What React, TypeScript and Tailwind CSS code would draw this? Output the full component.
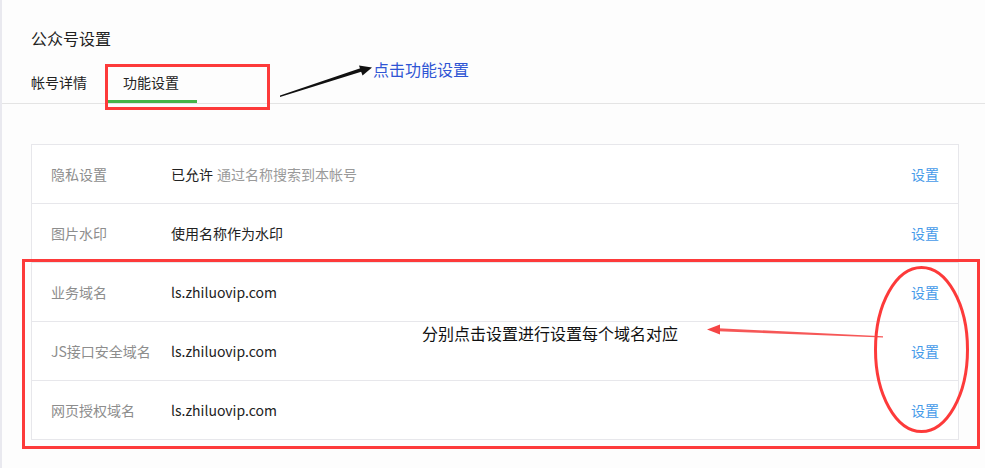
import React from 'react';

const rows = [
  { label: '隐私设置', value: '已允许', note: '通过名称搜索到本帐号' },
  { label: '图片水印', value: '使用名称作为水印' },
  { label: '业务域名', value: 'ls.zhiluovip.com' },
  { label: 'JS接口安全域名', value: 'ls.zhiluovip.com' },
  { label: '网页授权域名', value: 'ls.zhiluovip.com' },
];

const font = { fontFamily: '"Noto Sans CJK SC", "Noto Sans", sans-serif' };

const App = () => {
  return (
    <div className="relative w-[985px] h-[468px] overflow-hidden bg-[#fdfdfd] border-l-2 border-[#e9e9ef]" style={font}>
      {/* Header */}
      <div className="border-b border-[#e4e4e4]">
        <div className="pt-[26px] pl-[29px] text-[16px] leading-6 text-[#222]">公众号设置</div>
        <div className="mt-[14px] flex pl-[11px]">
          <div className="h-[39px] px-[18px] flex items-center text-[14px] text-[#222] border-b-[3px] border-transparent">帐号详情</div>
          <div className="h-[39px] px-[18px] flex items-center text-[14px] text-[#222] border-b-[3px] border-[#44b549]">功能设置</div>
        </div>
      </div>

      {/* Settings table */}
      <div className="mt-[40px] ml-[29px] w-[928px] border border-[#e7e7eb] bg-white">
        {rows.map((row, i) => (
          <div key={row.label} className={`flex items-center pl-[19px] pr-[19px] text-[14px] ${i > 0 ? 'border-t border-[#e7e7eb] h-[59px]' : 'h-[58px]'}`}>
            <div className="w-[120px] text-[#8d8d8d]">{row.label}</div>
            <div className="flex-1 text-[#222]">
              {row.value}
              {row.note && <span className="ml-[4px] text-[#9a9a9a]">{row.note}</span>}
            </div>
            <a className="text-[#459ae9] cursor-pointer">设置</a>
          </div>
        ))}
      </div>

      {/* Annotations */}
      <svg className="absolute inset-0 pointer-events-none" width="985" height="468">
        <rect x="104.5" y="65.5" width="162" height="43" fill="none" stroke="#fd3a3a" strokeWidth="3" />
        <rect x="21.5" y="260.5" width="955" height="187" fill="none" stroke="#fd3a3a" strokeWidth="3" />
        <ellipse cx="919.5" cy="349.5" rx="46" ry="82" fill="none" stroke="#fd3a3a" strokeWidth="3" />
        {/* black arrow */}
        <polygon points="278,97 360,71.5 359,68 278,95.5" fill="#111" />
        <polygon points="370,67.5 357,65.5 360.5,75.5" fill="#111" />
        {/* red arrow */}
        <polygon points="881,336.2 716,328.2 716,331.2 881,337.6" fill="#f54545" opacity="0.9" />
        <polygon points="705,329.5 718,324.5 718,334.5" fill="#f54545" />
      </svg>
      <span className="absolute left-[371px] top-[57px] text-[16px] leading-6 text-[#2f55d4]">点击功能设置</span>
      <span className="absolute left-[420px] top-[321px] text-[16px] leading-6 text-[#111]">分别点击设置进行设置每个域名对应</span>
    </div>
  );
};

export default App;
